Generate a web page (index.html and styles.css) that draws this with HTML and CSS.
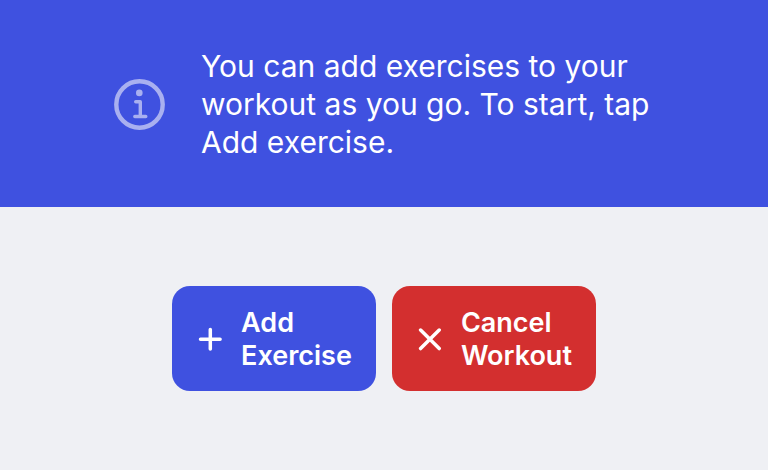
FILE: index.html
```html
<!DOCTYPE html>
<html lang="en">
  <head>
    <meta charset="UTF-8" />
    <meta name="viewport" content="width=device-width, initial-scale=1.0" />
    <title>Workout</title>
    <link rel="stylesheet" href="styles.css">
  </head>
  <body>
    <section class="info">
      <svg class="info-icon" viewBox="0 0 51 51" aria-hidden="true">
        <circle class="ring" cx="25.5" cy="25.5" r="23.2" />
        <path d="M21.7 22.7h4.6v14.8M20.8 37.5h11" />
        <circle class="dot" cx="25.3" cy="13.9" r="3.3" />
      </svg>
      <p class="info-text">
        You can add exercises to your workout as you go. To start, tap Add
        exercise.
      </p>
    </section>

    <main class="actions">
      <button type="button" class="btn btn-add">
        <svg class="btn-icon" viewBox="0 0 24 24" aria-hidden="true">
          <path d="M12.3 2.4v19.6M2.5 12.2h19.6" />
        </svg>
        <span>Add<br />Exercise</span>
      </button>
      <button type="button" class="btn btn-cancel">
        <svg class="btn-icon" viewBox="0 0 24 24" aria-hidden="true">
          <path d="M2.6 3l18.6 18.6M21.2 3L2.6 21.6" />
        </svg>
        <span>Cancel<br />Workout</span>
      </button>
    </main>
  </body>
</html>
```

FILE: styles.css
```css
body {
  font-family: "Inter", sans-serif;
  background-color: #eff0f4;
  color: #fff;
  margin: 0;
}

.info {
  background-color: #3f51e0;
  display: flex;
  justify-content: center;
  align-items: center;
  gap: 36px;
  padding: 47px 111px 46px 114px;
}

.info-icon {
  width: 51px;
  height: 51px;
  flex-shrink: 0;
  fill: none;
  stroke: #a9b0f0;
  stroke-width: 3.4;
  stroke-linecap: round;
  stroke-linejoin: round;
}

.info-icon .ring {
  stroke-width: 4.4;
}

.info-icon .dot {
  fill: #a9b0f0;
  stroke: none;
}

.info-text {
  margin: 0;
  max-width: 456px;
  font-size: 30px;
  line-height: 38px;
}

.actions {
  display: flex;
  justify-content: center;
  gap: 16px;
  padding: 79px 16px;
}

.btn {
  display: flex;
  align-items: center;
  gap: 19px;
  padding: 20px 24px 19px 26px;
  border: none;
  border-radius: 18px;
  color: #fff;
  font-family: inherit;
  font-size: 27px;
  font-weight: 600;
  line-height: 33px;
  text-align: left;
  cursor: pointer;
}

.btn-add {
  background-color: #3f51e0;
}

.btn-cancel {
  background-color: #d32f2f;
}

.btn-icon {
  width: 24px;
  height: 24px;
  flex-shrink: 0;
  fill: none;
  stroke: #fff;
  stroke-width: 3.5;
  stroke-linecap: round;
}
```
